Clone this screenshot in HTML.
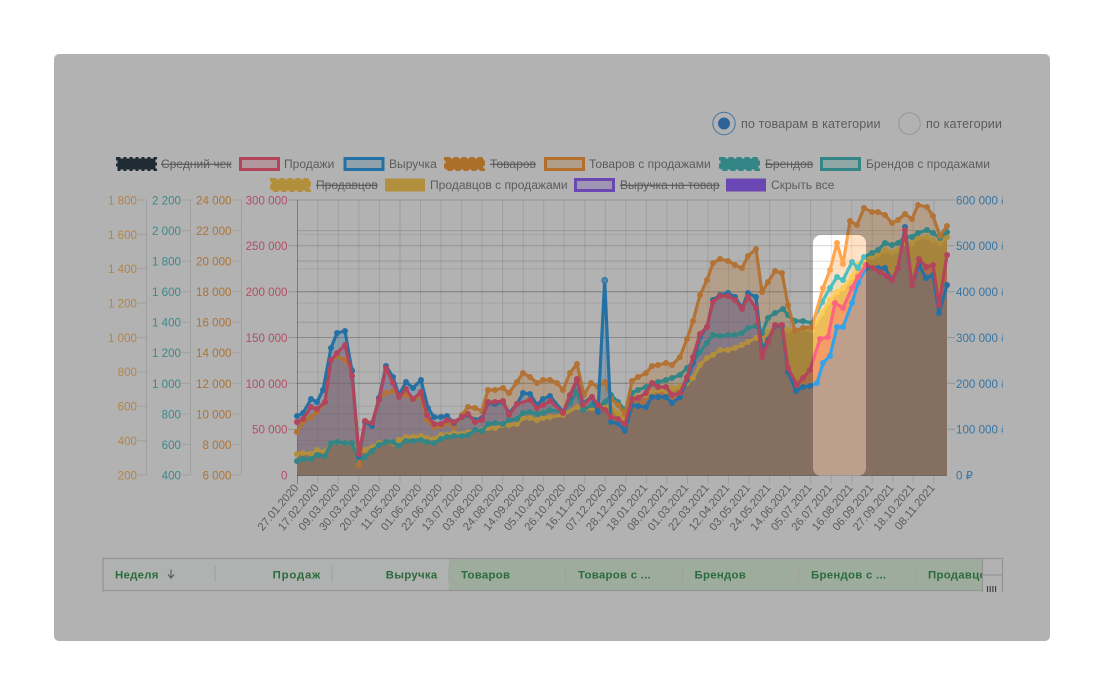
<!DOCTYPE html>
<html><head><meta charset="utf-8"><title>Chart</title>
<style>
html,body{margin:0;padding:0;background:#fff;width:1104px;height:695px;overflow:hidden}
#p{position:absolute;left:54px;top:54px;width:996px;height:587px;background:#fff;overflow:hidden;border-radius:5px}
#p svg{position:absolute;left:-54px;top:-54px}
#hole{position:absolute;left:759px;top:181px;width:53px;height:241px;border-radius:8px;box-shadow:0 0 0 1500px rgba(0,0,0,.3)}
text{font-family:"Liberation Sans",sans-serif}
.l{font-size:12.05px;fill:#858585}
.s{text-decoration:line-through}
.a{font-size:11.6px}
.x{font-size:11.3px;fill:#858585;text-anchor:end}
.h{font-size:11.4px;font-weight:bold;fill:#3f9a58;letter-spacing:.28px}
.ln{fill:none;stroke-width:3.2;stroke-linejoin:round;stroke-linecap:round}
</style></head><body>
<div id="p">
<svg width="1104" height="695" viewBox="0 0 1104 695" xmlns="http://www.w3.org/2000/svg">
<defs>
<clipPath id="rc"><rect x="950" y="190" width="53" height="295"/></clipPath>
<clipPath id="tc"><rect x="102" y="558" width="880" height="33"/></clipPath>
<marker id="my" markerUnits="userSpaceOnUse" markerWidth="8" markerHeight="8" refX="4" refY="4"><circle cx="4" cy="4" r="3" fill="#ffcd56"/></marker>
<marker id="mt" markerUnits="userSpaceOnUse" markerWidth="8" markerHeight="8" refX="4" refY="4"><circle cx="4" cy="4" r="3" fill="#4bc0c0"/></marker>
<marker id="mo" markerUnits="userSpaceOnUse" markerWidth="8" markerHeight="8" refX="4" refY="4"><circle cx="4" cy="4" r="3" fill="#ffa54d"/></marker>
<marker id="mb" markerUnits="userSpaceOnUse" markerWidth="8" markerHeight="8" refX="4" refY="4"><circle cx="4" cy="4" r="3" fill="#36a2eb"/></marker>
<marker id="mr" markerUnits="userSpaceOnUse" markerWidth="8" markerHeight="8" refX="4" refY="4"><circle cx="4" cy="4" r="3" fill="#ff6384"/></marker>
<path id="py" d="M297 454L303 453L311 454L317 450L325 452L331 443L345 443L352 443L359 453L365 450L372 447L379 443L386 442L393 443L399 440L406 437L413 437L421 436L427 438L434 439L441 435L447 435L454 433L462 434L468 432L482 430L488 428L495 428L503 425L509 425L517 424L523 418L530 418L537 420L543 418L550 417L563 415L577 407L583 410L592 408L605 405L611 408L618 413L625 420L632 398L638 397L646 395L652 392L658 390L666 391L672 388L680 387L687 383L693 378L700 365L707 358L713 355L720 350L728 350L735 348L742 345L748 342L756 338L762 340L768 332L775 326L782 325L788 330L795 330L812 330L822 313L830 300L837 292L843 288L852 277L858 265L864 258L872 257L878 255L885 250L892 252L898 250L905 243L912 243L918 238L927 237L933 240L940 243L947 237"/>
<path id="pt" d="M297 461L303 459L311 459L317 455L325 456L331 443L337 442L345 443L352 443L359 461L365 457L372 451L379 445L386 442L393 442L399 446L406 441L413 441L421 440L427 442L434 443L441 439L447 437L454 436L462 436L468 435L475 430L482 431L488 424L495 423L503 424L509 420L517 419L523 413L530 412L537 414L543 413L550 410L563 412L570 403L577 392L583 410L592 405L598 407L605 402L611 395L618 402L625 410L632 393L638 390L646 387L652 384L658 382L666 380L672 378L680 375L687 368L693 362L700 352L707 343L713 335L720 336L728 335L735 335L742 333L748 328L756 326L762 333L768 318L775 313L783 309L788 315L795 321L803 321L812 323L822 302L830 288L837 277L843 280L852 262L858 268L864 257L872 253L878 250L885 243L892 245L898 243L905 237L912 237L918 233L927 230L933 233L940 238L947 232"/>
<path id="po" d="M297 432L303 422L311 417L317 412L325 402L331 360L337 356L345 360L352 370L359 465L365 421L372 424L379 398L386 393L393 391L399 395L406 395L413 399L421 397L427 420L434 427L441 426L447 423L454 427L462 415L468 407L475 408L482 411L488 390L495 390L503 388L509 393L517 382L523 373L530 377L537 383L543 380L550 380L557 383L563 390L570 373L577 364L584 395L591 383L598 387L605 382L611 399L618 405L625 414L632 381L638 377L646 373L652 366L658 365L666 363L672 365L680 357L687 339L693 321L700 295L707 280L713 263L720 259L728 261L735 265L742 268L748 256L756 249L762 292L768 282L775 271L782 273L788 305L795 331L803 328L812 327L823 288L830 270L837 243L843 264L850 221L857 225L864 208L872 212L878 212L885 215L892 223L898 220L905 214L912 219L918 205L927 207L933 216L940 236L947 226"/>
<path id="pb" d="M297 416L303 413L311 399L317 402L323 390L331 348L337 333L345 331L352 371L359 457L365 422L372 426L379 398L386 366L393 377L399 395L406 382L413 388L421 380L428 408L434 417L441 417L447 416L454 423L462 417L468 415L475 420L482 418L488 403L495 404L503 402L509 413L517 404L523 393L530 394L537 405L543 399L550 396L563 412L570 397L577 380L583 403L592 397L598 412L604.7 280L611 422L618 423L625 431L632 405L638 406L646 407L652 397L658 397L666 397L672 403L680 397L687 380L693 363L700 337L707 327L713 300L720 295L728 293L735 297L742 308L748 293L756 297L762 350L768 340L775 326L782 326L788 372L796 391L803 387L810 386L817 383L823 363L830 356L837 327L843 327L852 303L858 283L866 268L878 268L885 268L892 280L898 268L905 227L912 285L919 265L926 278L933 275L939 313L947 285"/>
<path id="pr" d="M297 422L303 419L311 407L317 409L325 402L331 360L337 353L345 345L352 376L359 454L365 421L372 423L379 400L386 368L393 383L399 397L406 389L413 399L421 392L427 415L434 424L441 424L447 420L454 422L462 417L468 414L475 422L482 420L488 402L495 402L503 401L509 415L517 404L530 400L537 408L543 405L550 401L563 413L570 395L577 379L583 405L592 397L598 405L605 410L611 417L618 419L625 424L632 399L638 398L646 393L652 383L658 387L666 387L672 395L680 393L687 377L693 357L700 334L707 327L713 302L720 296L728 296L735 300L742 309L748 297L756 308L762 357L768 342L775 325L782 325L788 368L797 385L803 378L810 370L820 339L828 337L835 303L843 308L852 288L858 277L866 265L873 268L880 272L887 276L892 280L898 268L905 230L912 285L919 259L926 267L933 265L939 305L947 255"/>
</defs>

<!-- radios -->
<circle cx="724" cy="123.5" r="11.2" fill="#fff" stroke="#5aa8e6" stroke-width="1"/>
<circle cx="724" cy="123.5" r="6" fill="#3f8fdc"/>
<text x="741" y="128" class="l" style="font-size:12.6px;letter-spacing:.1px">по товарам в категории</text>
<circle cx="909.5" cy="123.5" r="10.8" fill="#fff" stroke="#d8d8d8" stroke-width="1"/>
<text x="926" y="128" class="l" style="font-size:12.6px;letter-spacing:.1px">по категории</text>

<!-- legend -->
<g stroke-width="3">
<rect x="117.5" y="158.5" width="38" height="11" fill="#2f3f4a" stroke="#2f3f4a" stroke-dasharray="3 3"/>
<rect x="240.5" y="158.5" width="38" height="11" fill="#ffd9e2" stroke="#ff6384"/>
<rect x="345" y="158.5" width="38" height="11" fill="#d0e8f8" stroke="#36a2eb"/>
<rect x="445.5" y="158.5" width="38" height="11" fill="#f59e3c" stroke="#f59e3c" stroke-dasharray="5 3"/>
<rect x="545.5" y="158.5" width="38" height="11" fill="#fde3c8" stroke="#ff9f40"/>
<rect x="720.5" y="158.5" width="38" height="11" fill="#4bc0c0" stroke="#4bc0c0" stroke-dasharray="5 3"/>
<rect x="821.5" y="158.5" width="38" height="11" fill="#d0f0ee" stroke="#4bc0c0"/>
<rect x="271.5" y="179.5" width="38" height="11" fill="#ffcd56" stroke="#ffcd56" stroke-dasharray="5 3"/>
<rect x="385" y="178.5" width="40" height="13" fill="#ffcd56" stroke="none"/>
<rect x="575.5" y="179.5" width="38" height="11" fill="#e3d6ff" stroke="#9966ff"/>
<rect x="726" y="178.5" width="40" height="13" fill="#9966ff" stroke="none"/>
</g>
<g class="l">
<text x="161" y="168" class="s">Средний чек</text>
<text x="284" y="168">Продажи</text>
<text x="389" y="168">Выручка</text>
<text x="490" y="168" class="s">Товаров</text>
<text x="589" y="168">Товаров с продажами</text>
<text x="765" y="168" class="s">Брендов</text>
<text x="866" y="168">Брендов с продажами</text>
<text x="316" y="189" class="s">Продавцов</text>
<text x="430" y="189">Продавцов с продажами</text>
<text x="620" y="189" class="s">Выручка на товар</text>
<text x="771" y="189">Скрыть все</text>
</g>

<!-- axes left -->
<path d="M146.5 200V475M190.5 200V475M241.5 200V475" stroke="#e6e6e6" fill="none"/>
<path d="M138 200h8.5M138 234.4h8.5M138 268.8h8.5M138 303.1h8.5M138 337.5h8.5M138 371.9h8.5M138 406.3h8.5M138 440.6h8.5M138 475h8.5" stroke="#e6e6e6"/>
<path d="M182 200h8.5M182 230.6h8.5M182 261.1h8.5M182 291.7h8.5M182 322.2h8.5M182 352.8h8.5M182 383.3h8.5M182 413.9h8.5M182 444.4h8.5M182 475h8.5" stroke="#e6e6e6"/>
<path d="M233 200h8.5M233 230.6h8.5M233 261.1h8.5M233 291.7h8.5M233 322.2h8.5M233 352.8h8.5M233 383.3h8.5M233 413.9h8.5M233 444.4h8.5M233 475h8.5" stroke="#e6e6e6"/>
<g class="a" text-anchor="end" fill="#ffc06a">
<text x="137" y="204.5">1 800</text><text x="137" y="239">1 600</text><text x="137" y="273">1 400</text><text x="137" y="307.5">1 200</text><text x="137" y="342">1 000</text><text x="137" y="376">800</text><text x="137" y="410.5">600</text><text x="137" y="445">400</text><text x="137" y="479.5">200</text>
</g>
<g class="a" text-anchor="end" fill="#58c4c4">
<text x="181" y="204.5">2 200</text><text x="181" y="235">2 000</text><text x="181" y="265.5">1 800</text><text x="181" y="296">1 600</text><text x="181" y="326.5">1 400</text><text x="181" y="357">1 200</text><text x="181" y="388">1 000</text><text x="181" y="418.5">800</text><text x="181" y="449">600</text><text x="181" y="479.5">400</text>
</g>
<g class="a" text-anchor="end" fill="#f8a650">
<text x="231.5" y="204.5">24 000</text><text x="231.5" y="235">22 000</text><text x="231.5" y="265.5">20 000</text><text x="231.5" y="296">18 000</text><text x="231.5" y="326.5">16 000</text><text x="231.5" y="357">14 000</text><text x="231.5" y="388">12 000</text><text x="231.5" y="418.5">10 000</text><text x="231.5" y="449">8 000</text><text x="231.5" y="479.5">6 000</text>
</g>
<g class="a" text-anchor="end" fill="#ff7094">
<text x="287.5" y="204.5">300 000</text><text x="287.5" y="250">250 000</text><text x="287.5" y="296">200 000</text><text x="287.5" y="342">150 000</text><text x="287.5" y="388">100 000</text><text x="287.5" y="433.5">50 000</text><text x="287.5" y="479.5">0</text>
</g>
<g class="a" fill="#50a8e8" clip-path="url(#rc)">
<text x="956" y="204.5">600 000 ₽</text><text x="956" y="250">500 000 ₽</text><text x="956" y="296">400 000 ₽</text><text x="956" y="342">300 000 ₽</text><text x="956" y="388">200 000 ₽</text><text x="956" y="433.5">100 000 ₽</text><text x="956" y="479.5">0 ₽</text>
</g>

<!-- grid -->
<path d="M317.8 200V484M338.4 200V484M358.9 200V484M379.4 200V484M400 200V484M420.5 200V484M441 200V484M461.6 200V484M482.1 200V484M502.6 200V484M523.2 200V484M543.7 200V484M564.2 200V484M584.8 200V484M605.3 200V484M625.8 200V484M646.4 200V484M666.9 200V484M687.4 200V484M708 200V484M728.5 200V484M749 200V484M769.6 200V484M790.1 200V484M810.6 200V484M831.2 200V484M851.7 200V484M872.2 200V484M892.8 200V484M913.3 200V484M933.8 200V484" stroke="rgba(0,0,0,.1)" fill="none"/>
<path d="M297 234.4H946M297 268.8H946M297 303.1H946M297 337.5H946M297 371.9H946M297 406.3H946M297 440.6H946" stroke="rgba(0,0,0,.08)"/>
<path d="M297 230.6H946M297 261.1H946M297 291.7H946M297 322.2H946M297 352.8H946M297 383.3H946M297 413.9H946M297 444.4H946" stroke="rgba(0,0,0,.14)"/>
<path d="M288 200H955M288 245.8H955M288 291.7H955M288 337.5H955M288 383.3H955M288 429.2H955" stroke="rgba(0,0,0,.17)"/>
<path d="M297.5 200V484" stroke="rgba(0,0,0,.3)" fill="none"/>

<!-- fills -->
<path fill="#ffcd56" d="M297 475L297 454L303 453L311 454L317 450L325 452L331 443L345 443L352 443L359 453L365 450L372 447L379 443L386 442L393 443L399 440L406 437L413 437L421 436L427 438L434 439L441 435L447 435L454 433L462 434L468 432L482 430L488 428L495 428L503 425L509 425L517 424L523 418L530 418L537 420L543 418L550 417L563 415L577 407L583 410L592 408L605 405L611 408L618 413L625 420L632 398L638 397L646 395L652 392L658 390L666 391L672 388L680 387L687 383L693 378L700 365L707 358L713 355L720 350L728 350L735 348L742 345L748 342L756 338L762 340L768 332L775 326L782 325L788 330L795 330L812 330L822 313L830 300L837 292L843 288L852 277L858 265L864 258L872 257L878 255L885 250L892 252L898 250L905 243L912 243L918 238L927 237L933 240L940 243L947 237L947 475Z"/>
<path fill="rgba(75,192,192,.12)" d="M297 475L297 461L303 459L311 459L317 455L325 456L331 443L337 442L345 443L352 443L359 461L365 457L372 451L379 445L386 442L393 442L399 446L406 441L413 441L421 440L427 442L434 443L441 439L447 437L454 436L462 436L468 435L475 430L482 431L488 424L495 423L503 424L509 420L517 419L523 413L530 412L537 414L543 413L550 410L563 412L570 403L577 392L583 410L592 405L598 407L605 402L611 395L618 402L625 410L632 393L638 390L646 387L652 384L658 382L666 380L672 378L680 375L687 368L693 362L700 352L707 343L713 335L720 336L728 335L735 335L742 333L748 328L756 326L762 333L768 318L775 313L783 309L788 315L795 321L803 321L812 323L822 302L830 288L837 277L843 280L852 262L858 268L864 257L872 253L878 250L885 243L892 245L898 243L905 237L912 237L918 233L927 230L933 233L940 238L947 232L947 475Z"/>
<path fill="rgba(255,159,64,.3)" d="M297 475L297 432L303 422L311 417L317 412L325 402L331 360L337 356L345 360L352 370L359 465L365 421L372 424L379 398L386 393L393 391L399 395L406 395L413 399L421 397L427 420L434 427L441 426L447 423L454 427L462 415L468 407L475 408L482 411L488 390L495 390L503 388L509 393L517 382L523 373L530 377L537 383L543 380L550 380L557 383L563 390L570 373L577 364L584 395L591 383L598 387L605 382L611 399L618 405L625 414L632 381L638 377L646 373L652 366L658 365L666 363L672 365L680 357L687 339L693 321L700 295L707 280L713 263L720 259L728 261L735 265L742 268L748 256L756 249L762 292L768 282L775 271L782 273L788 305L795 331L803 328L812 327L823 288L830 270L837 243L843 264L850 221L857 225L864 208L872 212L878 212L885 215L892 223L898 220L905 214L912 219L918 205L927 207L933 216L940 236L947 226L947 475Z"/>
<path fill="rgba(255,99,132,.34)" d="M297 475L297 422L303 419L311 407L317 409L325 402L331 360L337 353L345 345L352 376L359 454L365 421L372 423L379 400L386 368L393 383L399 397L406 389L413 399L421 392L427 415L434 424L441 424L447 420L454 422L462 417L468 414L475 422L482 420L488 402L495 402L503 401L509 415L517 404L530 400L537 408L543 405L550 401L563 413L570 395L577 379L583 405L592 397L598 405L605 410L611 417L618 419L625 424L632 399L638 398L646 393L652 383L658 387L666 387L672 395L680 393L687 377L693 357L700 334L707 327L713 302L720 296L728 296L735 300L742 309L748 297L756 308L762 357L768 342L775 325L782 325L788 368L797 385L803 378L810 370L820 339L828 337L835 303L843 308L852 288L858 277L866 265L873 268L880 272L887 276L892 280L898 268L905 230L912 285L919 259L926 267L933 265L939 305L947 255L947 475Z"/>
<path fill="rgba(54,162,235,.29)" d="M297 475L297 416L303 413L311 399L317 402L323 390L331 348L337 333L345 331L352 371L359 457L365 422L372 426L379 398L386 366L393 377L399 395L406 382L413 388L421 380L428 408L434 417L441 417L447 416L454 423L462 417L468 415L475 420L482 418L488 403L495 404L503 402L509 413L517 404L523 393L530 394L537 405L543 399L550 396L563 412L570 397L577 380L583 403L592 397L598 412L604.7 280L611 422L618 423L625 431L632 405L638 406L646 407L652 397L658 397L666 397L672 403L680 397L687 380L693 363L700 337L707 327L713 300L720 295L728 293L735 297L742 308L748 293L756 297L762 350L768 340L775 326L782 326L788 372L796 391L803 387L810 386L817 383L823 363L830 356L837 327L843 327L852 303L858 283L866 268L878 268L885 268L892 280L898 268L905 227L912 285L919 265L926 278L933 275L939 313L947 285L947 475Z"/>
<path d="M297 475.5H947" stroke="rgba(0,0,0,.4)"/>

<!-- lines -->
<use href="#py" class="ln" stroke="#ffcd56" marker-start="url(#my)" marker-mid="url(#my)" marker-end="url(#my)"/>
<use href="#pt" class="ln" stroke="#4bc0c0" marker-start="url(#mt)" marker-mid="url(#mt)" marker-end="url(#mt)"/>
<use href="#po" class="ln" stroke="#ffa54d" marker-start="url(#mo)" marker-mid="url(#mo)" marker-end="url(#mo)"/>
<use href="#pb" class="ln" stroke="#36a2eb" marker-start="url(#mb)" marker-mid="url(#mb)" marker-end="url(#mb)"/>
<use href="#pr" class="ln" stroke="#ff6384" marker-start="url(#mr)" marker-mid="url(#mr)" marker-end="url(#mr)"/>
<circle cx="604.7" cy="280.5" r="2.8" fill="#7cc0f0" stroke="#36a2eb"/>

<!-- x labels -->
<g class="x">
<text transform="translate(299,488) rotate(-50)">27.01.2020</text>
<text transform="translate(319.5,488) rotate(-50)">17.02.2020</text>
<text transform="translate(340,488) rotate(-50)">09.03.2020</text>
<text transform="translate(360.6,488) rotate(-50)">30.03.2020</text>
<text transform="translate(381.1,488) rotate(-50)">20.04.2020</text>
<text transform="translate(401.6,488) rotate(-50)">11.05.2020</text>
<text transform="translate(422.2,488) rotate(-50)">01.06.2020</text>
<text transform="translate(442.7,488) rotate(-50)">22.06.2020</text>
<text transform="translate(463.2,488) rotate(-50)">13.07.2020</text>
<text transform="translate(483.8,488) rotate(-50)">03.08.2020</text>
<text transform="translate(504.3,488) rotate(-50)">24.08.2020</text>
<text transform="translate(524.8,488) rotate(-50)">14.09.2020</text>
<text transform="translate(545.4,488) rotate(-50)">05.10.2020</text>
<text transform="translate(565.9,488) rotate(-50)">26.10.2020</text>
<text transform="translate(586.4,488) rotate(-50)">16.11.2020</text>
<text transform="translate(607,488) rotate(-50)">07.12.2020</text>
<text transform="translate(627.5,488) rotate(-50)">28.12.2020</text>
<text transform="translate(648,488) rotate(-50)">18.01.2021</text>
<text transform="translate(668.6,488) rotate(-50)">08.02.2021</text>
<text transform="translate(689.1,488) rotate(-50)">01.03.2021</text>
<text transform="translate(709.6,488) rotate(-50)">22.03.2021</text>
<text transform="translate(730.2,488) rotate(-50)">12.04.2021</text>
<text transform="translate(750.7,488) rotate(-50)">03.05.2021</text>
<text transform="translate(771.2,488) rotate(-50)">24.05.2021</text>
<text transform="translate(791.8,488) rotate(-50)">14.06.2021</text>
<text transform="translate(812.3,488) rotate(-50)">05.07.2021</text>
<text transform="translate(832.8,488) rotate(-50)">26.07.2021</text>
<text transform="translate(853.4,488) rotate(-50)">16.08.2021</text>
<text transform="translate(873.9,488) rotate(-50)">06.09.2021</text>
<text transform="translate(894.4,488) rotate(-50)">27.09.2021</text>
<text transform="translate(915,488) rotate(-50)">18.10.2021</text>
<text transform="translate(935.5,488) rotate(-50)">08.11.2021</text>
</g>

<!-- table -->
<rect x="103" y="559" width="346" height="31" fill="#fbfffc"/>
<rect x="449" y="559" width="533" height="31" fill="#e3f6e3"/>
<path d="M215 566V582M332 566V582M449 566V582M565.5 566V582M682.5 566V582M798.5 566V582M915.5 566V582" stroke="#e2e6e2"/>
<path d="M102 558.5H1002.5V592M103 559V592M103 590.5H982M982.5 558V592M982 575H1002.5" fill="none" stroke="#d6d6d6" stroke-width="1.3"/>
<g clip-path="url(#tc)">
<text x="115" y="578.5" class="h">Неделя</text>
<text x="321" y="578.5" class="h" text-anchor="end" style="letter-spacing:.8px">Продаж</text>
<text x="437.5" y="578.5" class="h" text-anchor="end">Выручка</text>
<text x="461" y="578.5" class="h">Товаров</text>
<text x="578" y="578.5" class="h">Товаров с ...</text>
<text x="694.5" y="578.5" class="h">Брендов</text>
<text x="811" y="578.5" class="h">Брендов с ...</text>
<text x="928" y="578.5" class="h">Продавцов</text>
</g>
<path d="M171 569.5V577.5M168 574.5L171 578L174 574.5" fill="none" stroke="#808080" stroke-width="1.1"/>
<path d="M987.5 586V592M990.2 586V592M992.9 586V592M995.6 586V592" stroke="#555" stroke-width="1.1"/>
</svg>
<div id="hole"></div>
</div>
</body></html>
